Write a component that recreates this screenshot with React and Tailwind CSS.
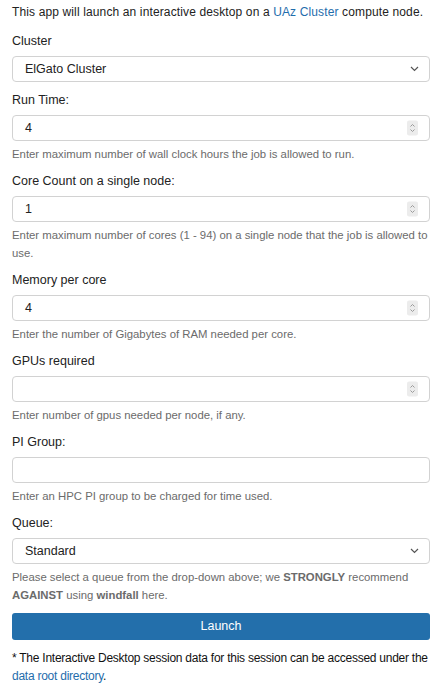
import React from "react";

function Spinner() {
  return (
    <span className="absolute right-[11px] top-1/2 -translate-y-1/2 flex h-[15px] w-[11px] flex-col items-center justify-center rounded-[2px] bg-[#ececec]">
      <svg width="7" height="11" viewBox="0 0 7 11" fill="none" stroke="#9a9a9a" strokeWidth="1">
        <path d="M1.5 4 L3.5 2 L5.5 4" />
        <path d="M1.5 7 L3.5 9 L5.5 7" />
      </svg>
    </span>
  );
}

function Chevron() {
  return (
    <svg className="absolute right-[10px] top-1/2 -translate-y-1/2" width="9" height="6" viewBox="0 0 9 6" fill="none" stroke="#555" strokeWidth="1.2">
      <path d="M1 1 L4.5 4.5 L8 1" />
    </svg>
  );
}

function Box({ value, kind }) {
  return (
    <div className="relative h-[26px] w-full rounded-[4px] border border-[#d2d2d2] bg-white">
      <span className="absolute left-[12px] top-1/2 -translate-y-1/2 text-[12.5px] text-[#222]">{value}</span>
      {kind === "number" && <Spinner />}
      {kind === "select" && <Chevron />}
    </div>
  );
}

function Group({ label, value, kind, help }) {
  return (
    <div className="mb-[9px]">
      <div className="mb-[6px] h-[18px] leading-[18px] text-[#222]">{label}</div>
      <Box value={value} kind={kind} />
      {help && <div className="mt-[4px] text-[11.35px] leading-[18px] text-[#6b6b6b]">{help}</div>}
    </div>
  );
}

export default function App() {
  return (
    <div className="min-h-[696px] bg-white pl-[12px] pr-[18px] pt-[3px] text-[12.5px] text-[#222]" style={{ fontFamily: '"Liberation Sans", Arial, sans-serif' }}>
      <p className="mb-[11px] whitespace-nowrap text-[12px] leading-[18px] tracking-[0.13px]">
        This app will launch an interactive desktop on a <a className="text-[#1f6dac]">UAz Cluster</a> compute node.
      </p>
      <Group label="Cluster" value="ElGato Cluster" kind="select" />
      <Group label="Run Time:" value="4" kind="number" help="Enter maximum number of wall clock hours the job is allowed to run." />
      <Group label="Core Count on a single node:" value="1" kind="number" help="Enter maximum number of cores (1 - 94) on a single node that the job is allowed to use." />
      <Group label="Memory per core" value="4" kind="number" help="Enter the number of Gigabytes of RAM needed per core." />
      <Group label="GPUs required" value="" kind="number" help="Enter number of gpus needed per node, if any." />
      <Group label="PI Group:" value="" kind="text" help="Enter an HPC PI group to be charged for time used." />
      <Group
        label="Queue:"
        value="Standard"
        kind="select"
        help={
          <>
            Please select a queue from the drop-down above; we <b>STRONGLY</b> recommend <b>AGAINST</b> using <b>windfall</b> here.
          </>
        }
      />
      <button className="mt-[1px] block h-[27px] w-full rounded-[3px] bg-[#236fab] text-[12.5px] text-white">Launch</button>
      <p className="mt-[9px] text-[12px] leading-[18px] tracking-[-0.25px] text-[#111]">
        * The Interactive Desktop session data for this session can be accessed under the <a className="text-[#1f6dac]">data root directory</a>.
      </p>
    </div>
  );
}
